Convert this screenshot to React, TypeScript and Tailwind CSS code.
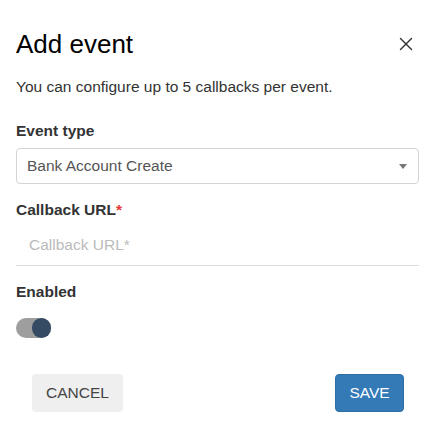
import { X } from 'lucide-react';

export default function App() {
  return (
    <div className="w-[436px] h-[427px] bg-white font-['Liberation_Sans',Arial,sans-serif] text-[#333]">
      <div className="px-4 pt-[27px]">
        <div className="flex items-center justify-between">
          <h1 className="text-[26px] leading-[34px] text-black">Add event</h1>
          <button className="mr-[3px] text-[#333]">
            <X className="h-[22px] w-[22px]" strokeWidth={1.6} />
          </button>
        </div>

        <p className="mt-[16px] text-[15.5px] leading-5">You can configure up to 5 callbacks per event.</p>

        <div className="mt-[24px] text-[15.5px] font-bold leading-5">Event type</div>
        <div className="mt-[7px] flex h-[36px] w-[403px] items-center justify-between rounded border border-[#d4d4d4] pl-[10px] pr-[10px]">
          <span className="text-[15.5px] text-[#555]">Bank Account Create</span>
          <svg width="8" height="5" viewBox="0 0 8 5" className="mr-[1px]">
            <path d="M0 0 L8 0 L4 5 Z" fill="#777" />
          </svg>
        </div>

        <div className="mt-[16px] text-[15.5px] font-bold leading-5">
          Callback URL<span className="text-[#e53935]">*</span>
        </div>
        <div className="mt-[15px] w-[403px] border-b border-[#ddd] pb-[10px] pl-[13px] text-[15.5px] leading-5 text-[#bbb]">
          Callback URL*
        </div>

        <div className="mt-[16px] text-[15.5px] font-bold leading-5">Enabled</div>
        <div className="mt-[16px] relative h-[20px] w-[35px] rounded-full bg-[#9e9e9e]">
          <div className="absolute right-0 top-0 h-[20px] w-[19px] rounded-full bg-[#354b63]" />
        </div>

        <div className="mt-[36px] flex justify-between pl-4 pr-[16px]">
          <button className="h-[38px] w-[91px] rounded bg-[#efefef] text-[15.5px] text-[#444]">CANCEL</button>
          <button className="h-[38px] w-[69px] rounded border border-[#2e6da4] bg-[#337ab7] text-[15.5px] text-white">SAVE</button>
        </div>
      </div>
    </div>
  );
}
